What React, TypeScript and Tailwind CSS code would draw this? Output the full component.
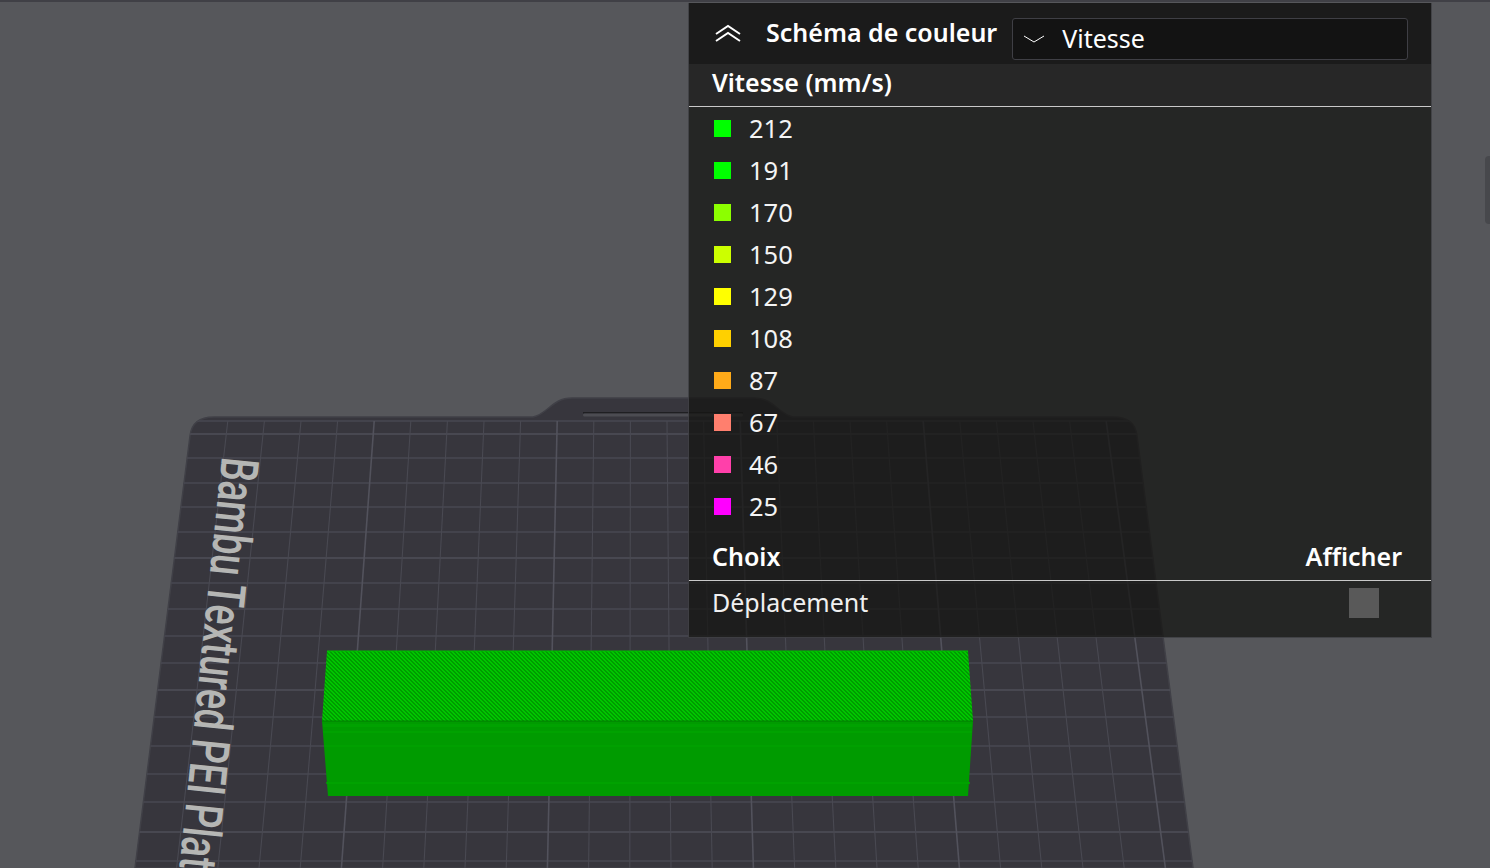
import React from 'react'

const speeds = [
  { value: '212', color: '#00ff00' },
  { value: '191', color: '#00ff00' },
  { value: '170', color: '#8cff00' },
  { value: '150', color: '#ccff00' },
  { value: '129', color: '#ffff00' },
  { value: '108', color: '#ffd000' },
  { value: '87', color: '#ffaa19' },
  { value: '67', color: '#ff7f6e' },
  { value: '46', color: '#ff40aa' },
  { value: '25', color: '#ff00ff' },
]

const rows = [421, 434, 458, 483, 507, 532, 558, 583, 609, 636, 663, 690, 717, 746, 774, 802, 832, 861]
const columns = [-12, -11, -10, -9, -8, -7, -6, -5, -4, -3, -2, -1, 0, 1, 2, 3, 4, 5, 6, 7, 8, 9, 10, 11, 12]

const platePath =
  'M135 868 L190 436 Q192 417 214 417 L533 417 C548 414 552 398 572 398 L754 398 C774 398 778 414 793 417 L1113 417 Q1135 417 1137 436 L1193 868 Z'

function PlateScene() {
  return (
    <svg className="absolute inset-0" width="1490" height="868" viewBox="0 0 1490 868">
      <defs>
        <clipPath id="plate">
          <path d={platePath} />
        </clipPath>
        <pattern id="hatch" width="4" height="4" patternUnits="userSpaceOnUse">
          <rect width="4" height="4" fill="#009c00" />
          <rect x="0" y="0" width="2" height="1" fill="#00c600" />
          <rect x="1" y="1" width="2" height="1" fill="#00c600" />
          <rect x="2" y="2" width="2" height="1" fill="#00c600" />
          <rect x="3" y="3" width="1" height="1" fill="#00c600" />
          <rect x="0" y="3" width="1" height="1" fill="#00c600" />
        </pattern>
      </defs>

      <path d={platePath} fill="#37363d" stroke="#404047" strokeWidth="1.5" />
      <g clipPath="url(#plate)">
        {rows.map((y, i) => (
          <line key={y} x1="100" x2="1230" y1={y} y2={y} stroke={i % 5 === 1 ? '#4f4f59' : '#494952'} strokeWidth="1.5" />
        ))}
        {columns.map((k) => (
          <line
            key={k}
            x1={667 + k * 36.6}
            y1="421"
            x2={671 + k * 41.2}
            y2="868"
            stroke={(k + 8) % 5 === 0 ? '#52525c' : '#494952'}
            strokeWidth={(k + 8) % 5 === 0 ? 1.6 : 1.1}
          />
        ))}
      </g>
      <rect x="583" y="412" width="160" height="1.5" fill="#1f1f22" />
      <rect x="583" y="413.5" width="160" height="3" rx="1.5" fill="#4c4c52" />

      <text
        transform="translate(222 456) rotate(95.9) scale(1 1.32)"
        x="0"
        y="0"
        fontFamily="Roboto, sans-serif"
        fontWeight="500"
        fontSize="40"
        textLength="434"
        lengthAdjust="spacingAndGlyphs"
        fill="#b5b6b4"
      >
        Bambu Textured PEI Plate
      </text>

      <path d="M327 651 L968 651 L973 721 L322 721 Z" fill="url(#hatch)" />
      <path d="M327 651 L968 651" stroke="#00c000" strokeWidth="1" />
      <path d="M322 721 L973 721 L968 796 L328 796 Z" fill="#009b00" />
      <path d="M323 724 L972 724 L971.8 727 L323.4 727 Z" fill="#00a200" />
      <path d="M323 731 L972 731 L971.6 733 L323.6 733 Z" fill="#00a200" />
      <path d="M324 745 L971 745 L970.8 747 L324.4 747 Z" fill="#00a000" />
      <path d="M326 782 L970 782 L969.8 784 L326.4 784 Z" fill="#00a200" />
      <path d="M322 721 L973 721" stroke="#007f00" strokeWidth="1" />
    </svg>
  )
}

function DoubleChevron() {
  return (
    <svg width="26" height="18" viewBox="0 0 26 18" fill="none" stroke="#ffffff" strokeWidth="2">
      <path d="M1 10 L13 2 L25 10" />
      <path d="M1 17 L13 9 L25 17" />
    </svg>
  )
}

export default function App() {
  return (
    <div className="relative h-[868px] w-[1490px] overflow-hidden bg-[#56575b] font-['Noto_Sans',sans-serif] text-white">
      <PlateScene />
      <div className="absolute top-0 left-0 h-[2px] w-full bg-[#404046]" />
      <div className="absolute top-[156px] right-0 h-[68px] w-[5px] rounded-l bg-[#47484c]" />

      <div className="absolute top-[3px] left-[688px] w-[744px] border border-t-0 border-[#60606a]/50 bg-[#161513]/75">
        <div className="flex h-[61px] items-center bg-[#1b1b1b] pb-[1px] pl-[26px]">
          <DoubleChevron />
          <span className="ml-[25px] text-[25px] font-semibold">Schéma de couleur</span>
          <div className="mt-[11px] ml-[15px] flex h-[42px] w-[396px] items-center rounded-[3px] border border-[#3f3f45] bg-[#131313] pl-[10px] text-[25px]">
            <svg width="22" height="8" viewBox="0 0 22 8" fill="none" stroke="#ffffff" strokeWidth="1">
              <path d="M1 1 L11 7 L21 1" />
            </svg>
            <span className="ml-[17px]">Vitesse</span>
          </div>
        </div>

        <div className="flex h-[43px] items-start border-b border-[#c9c9c9] bg-[#282828]/80 pl-[23px] text-[25px] leading-[36px] font-semibold">
          Vitesse (mm/s)
        </div>

        <div className="pt-[1px]">
          {speeds.map((s) => (
            <div key={s.value + s.color} className="flex h-[42px] items-center pl-[25px]">
              <div className="mb-[1px] h-[17px] w-[17px]" style={{ backgroundColor: s.color }} />
              <span className="mb-[2px] ml-[18px] text-[25.5px] text-[#f4f4f4]">{s.value}</span>
            </div>
          ))}
        </div>

        <div className="flex h-[53px] items-end justify-between border-b border-[#c9c9c9] pr-[29px] pb-[5px] pl-[23px] text-[25px] font-semibold">
          <span>Choix</span>
          <span>Afficher</span>
        </div>

        <div className="mb-[12px] flex h-[44px] items-center justify-between pr-[52px] pl-[23px] text-[25px] text-[#f0f0f0]">
          <span>Déplacement</span>
          <div className="h-[30px] w-[30px] bg-[#595959]" />
        </div>
      </div>
    </div>
  )
}
